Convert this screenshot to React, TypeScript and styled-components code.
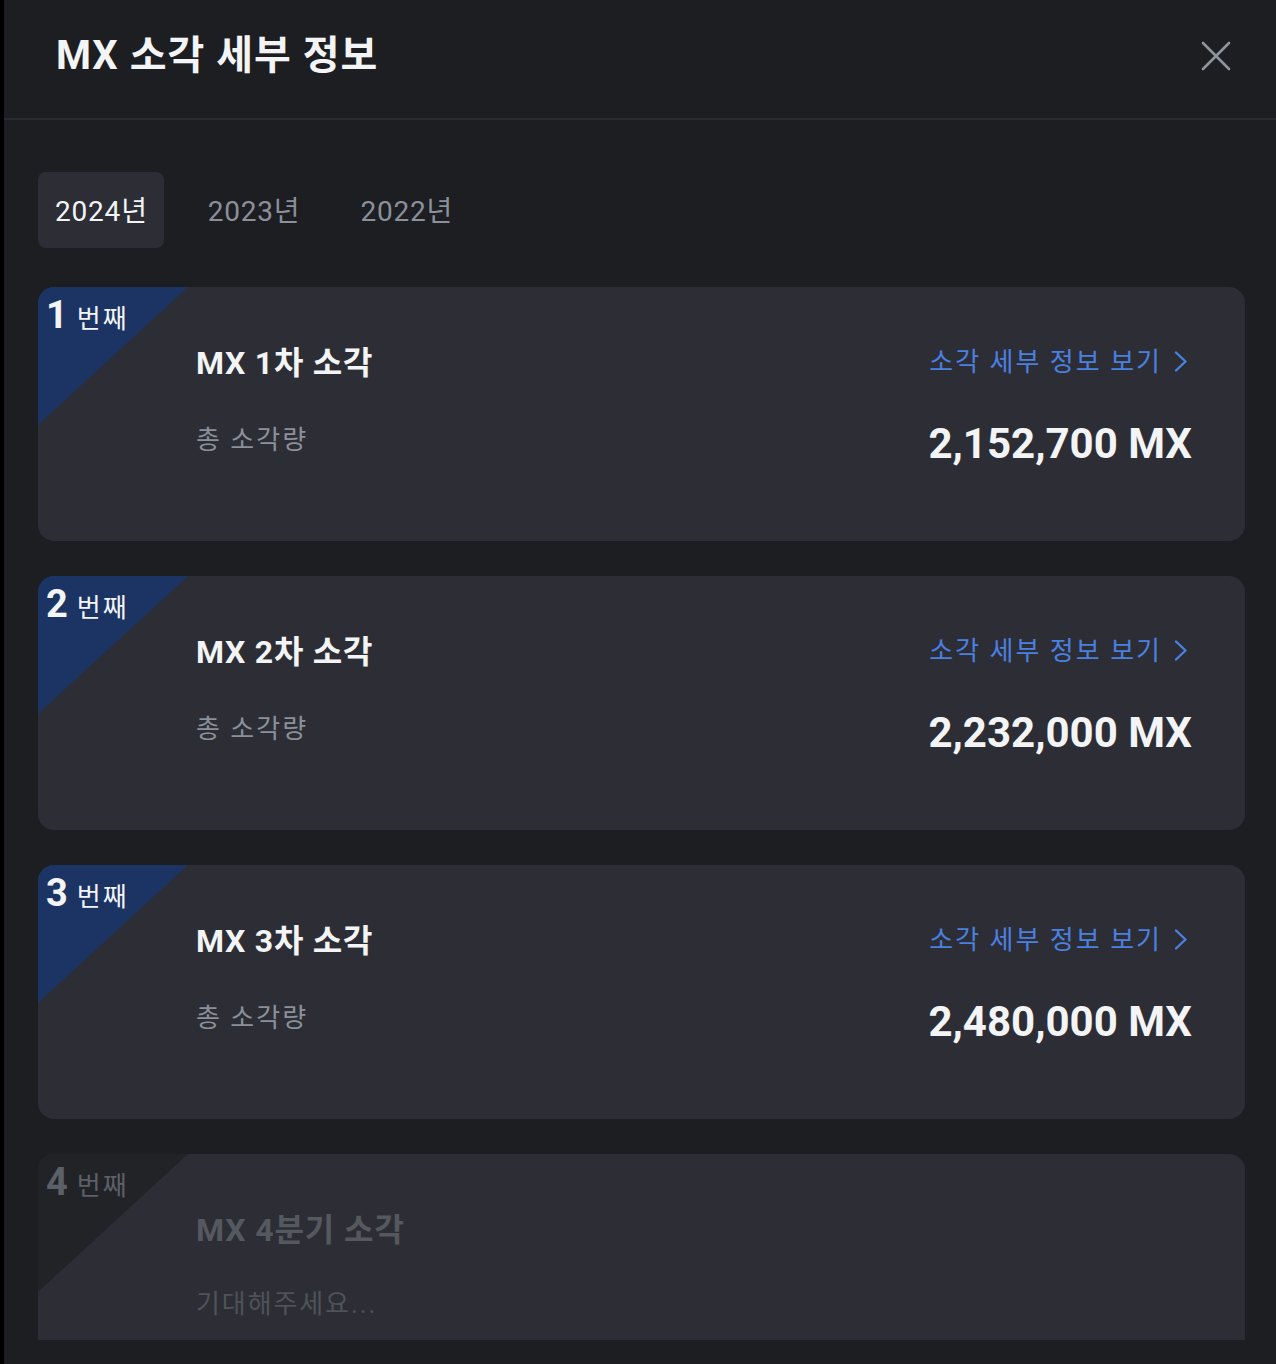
import React, { useState } from "react";
import styled, { createGlobalStyle, css } from "styled-components";

const GlobalStyle = createGlobalStyle`
  html, body {
    margin: 0;
    padding: 0;
    background: #000;
  }
  body {
    font-family: Roboto, "Noto Sans CJK KR", "Noto Sans", sans-serif;
    -webkit-font-smoothing: antialiased;
  }
  * { box-sizing: border-box; }
`;

const Page = styled.div`
  display: flex;
  width: 1276px;
  height: 1364px;
  overflow: hidden;
  background: #000;
`;

const Backdrop = styled.div`
  width: 4px;
  flex-shrink: 0;
  background: #000;
`;

const Modal = styled.section`
  flex: 1;
  display: flex;
  flex-direction: column;
  background: #1d1e22;
  min-width: 0;
`;

const Header = styled.header`
  height: 120px;
  flex-shrink: 0;
  display: flex;
  align-items: center;
  justify-content: space-between;
  padding: 0 44px 6px 52px;
  border-bottom: 2px solid #2a2b30;
`;

const Title = styled.h1`
  margin: 0;
  font-size: 40px;
  line-height: 48px;
  font-weight: 700;
  color: #f3f4f6;
  letter-spacing: 1px;
`;

const CloseButton = styled.button`
  width: 32px;
  height: 32px;
  padding: 0;
  border: 0;
  background: transparent;
  display: flex;
  align-items: center;
  justify-content: center;
  cursor: pointer;
`;

const Body = styled.div`
  flex: 1;
  min-height: 0;
  display: flex;
  flex-direction: column;
  padding: 52px 31px 24px 34px;
`;

const Tabs = styled.div`
  display: flex;
  gap: 27px;
  margin-bottom: 39px;
  flex-shrink: 0;
`;

const Tab = styled.button<{ $active?: boolean }>`
  height: 76px;
  padding: 0 16px 2px 17px;
  border: 0;
  border-radius: 8px;
  font-family: inherit;
  font-size: 28px;
  font-weight: 400;
  letter-spacing: 0.8px;
  cursor: pointer;
  background: ${(p) => (p.$active ? "#2d2e35" : "transparent")};
  color: ${(p) => (p.$active ? "#f3f4f6" : "#8b909a")};
`;

const CardList = styled.div`
  flex: 1;
  min-height: 0;
  overflow: hidden;
  display: flex;
  flex-direction: column;
  gap: 35px;
`;

const Card = styled.article`
  position: relative;
  flex-shrink: 0;
  background: #2d2e35;
  border-radius: 16px;
  overflow: hidden;
  padding: 58px 53px 72px 158px;
  min-height: 254px;
`;

const Corner = styled.div<{ $muted?: boolean }>`
  position: absolute;
  top: 0;
  left: 0;
  width: 150px;
  height: 138px;
  clip-path: polygon(0 0, 100% 0, 0 100%);
  background: ${(p) => (p.$muted ? "#222327" : "#1b3463")};
`;

const Rank = styled.div<{ $muted?: boolean }>`
  position: absolute;
  top: 6px;
  left: 8px;
  display: flex;
  align-items: baseline;
  gap: 9px;
  color: ${(p) => (p.$muted ? "#5c6068" : "#f3f4f6")};
`;

const RankNum = styled.span`
  font-size: 38px;
  line-height: 44px;
  font-weight: 700;
`;

const RankSuffix = styled.span`
  font-size: 26px;
  line-height: 30px;
  font-weight: 400;
  letter-spacing: 2px;
`;

const Grid = styled.div`
  display: grid;
  grid-template-columns: 1fr auto;
  row-gap: 40px;
  position: relative;
`;

const RoundTitle = styled.h2<{ $muted?: boolean }>`
  margin: 0;
  font-size: 32px;
  line-height: 36px;
  font-weight: 700;
  letter-spacing: ${(p) => (p.$muted ? "0.9px" : "0.75px")};
  color: ${(p) => (p.$muted ? "#55585f" : "#f3f4f6")};
`;

const DetailLink = styled.a`
  display: flex;
  align-items: center;
  gap: 12px;
  justify-self: end;
  margin-right: 4px;
  margin-top: -3px;
  font-size: 26px;
  line-height: 36px;
  letter-spacing: 2px;
  color: #4a80e0;
  text-decoration: none;
  cursor: pointer;
`;

const Label = styled.span<{ $muted?: boolean }>`
  font-size: 26px;
  line-height: 38px;
  letter-spacing: ${(p) => (p.$muted ? "1.9px" : "2px")};
  color: ${(p) => (p.$muted ? "#4f5259" : "#8b909a")};
  ${(p) =>
    p.$muted &&
    css`
      margin-top: -3px;
    `}
`;

const Amount = styled.span`
  justify-self: end;
  font-size: 42px;
  line-height: 48px;
  font-weight: 700;
  color: #f3f4f6;
  margin-top: -1px;
`;

const CloseIcon = () => (
  <svg width="30" height="30" viewBox="0 0 30 30" fill="none">
    <path d="M2 2 L28 28 M28 2 L2 28" stroke="#8e939c" strokeWidth="2.6" strokeLinecap="round" />
  </svg>
);

const Chevron = () => (
  <svg width="14" height="21" viewBox="0 0 14 21" fill="none">
    <path d="M2 1.5 L11.5 10.5 L2 19.5" stroke="#4a80e0" strokeWidth="2.4" strokeLinecap="round" strokeLinejoin="round" />
  </svg>
);

type Round = { rank: number; title: string; amount?: string };

const rounds: Round[] = [
  { rank: 1, title: "MX 1차 소각", amount: "2,152,700 MX" },
  { rank: 2, title: "MX 2차 소각", amount: "2,232,000 MX" },
  { rank: 3, title: "MX 3차 소각", amount: "2,480,000 MX" },
  { rank: 4, title: "MX 4분기 소각" },
];

const years = ["2024년", "2023년", "2022년"];

export default function App() {
  const [year, setYear] = useState(years[0]);
  return (
    <>
      <GlobalStyle />
      <Page>
        <Backdrop />
        <Modal>
          <Header>
            <Title>MX 소각 세부 정보</Title>
            <CloseButton aria-label="닫기">
              <CloseIcon />
            </CloseButton>
          </Header>
          <Body>
            <Tabs>
              {years.map((y) => (
                <Tab key={y} $active={y === year} onClick={() => setYear(y)}>
                  {y}
                </Tab>
              ))}
            </Tabs>
            <CardList>
              {rounds.map((r) => {
                const muted = !r.amount;
                return (
                  <Card key={r.rank}>
                    <Corner $muted={muted} />
                    <Rank $muted={muted}>
                      <RankNum>{r.rank}</RankNum>
                      <RankSuffix>번째</RankSuffix>
                    </Rank>
                    <Grid>
                      <RoundTitle $muted={muted}>{r.title}</RoundTitle>
                      {muted ? (
                        <span />
                      ) : (
                        <DetailLink>
                          소각 세부 정보 보기
                          <Chevron />
                        </DetailLink>
                      )}
                      {muted ? (
                        <Label $muted>기대해주세요...</Label>
                      ) : (
                        <>
                          <Label>총 소각량</Label>
                          <Amount>{r.amount}</Amount>
                        </>
                      )}
                    </Grid>
                  </Card>
                );
              })}
            </CardList>
          </Body>
        </Modal>
      </Page>
    </>
  );
}
